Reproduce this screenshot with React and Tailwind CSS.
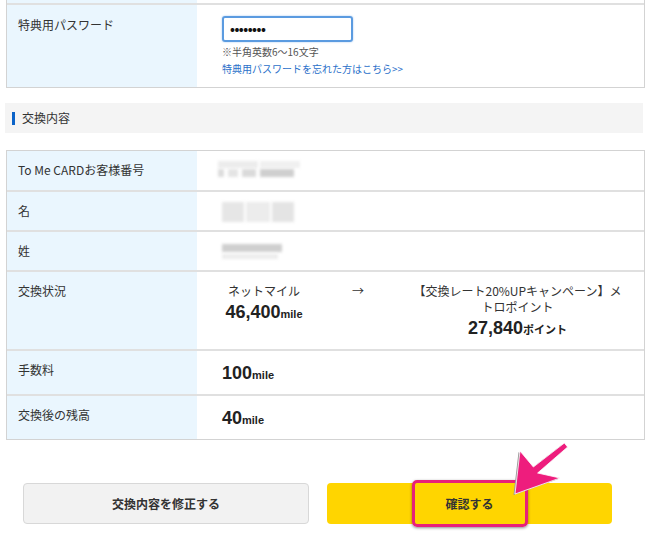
import React from 'react';

const font = "font-['Noto_Sans_CJK_JP','Noto_Sans',sans-serif]";

function Blur({ className }) {
  return <div className={`blur-[1.5px] ${className}`} />;
}

function Row({ label, children, className = '', valueClass = '' }) {
  return (
    <div className={`grid grid-cols-[190px_1fr] border-t-2 border-[#e0e0e0] ${className}`}>
      <div className="bg-[#eaf6fe] pl-[11px] pt-[11px] text-[12px] leading-[16px] text-[#333]">{label}</div>
      <div className={`pl-[25px] ${valueClass}`}>{children}</div>
    </div>
  );
}

function Amount({ value, unit }) {
  return (
    <span className="font-['Liberation_Sans','Noto_Sans_CJK_JP',sans-serif] text-[18px] font-bold text-[#222]">
      {value}
      <span className="text-[11px]">{unit}</span>
    </span>
  );
}

export default function App() {
  return (
    <div className={`relative w-[650px] h-[533px] overflow-hidden bg-white ${font}`}>
      {/* password table */}
      <div className="ml-[6px] w-[639px] border-x border-b border-[#d3d3d3]">
        <div className="grid grid-cols-[190px_1fr] h-[3px]">
          <div className="bg-[#eaf6fe]" />
          <div />
        </div>
        <div className="grid grid-cols-[190px_1fr] h-[84px] border-t-2 border-[#e0e0e0]">
          <div className="bg-[#eaf6fe] pl-[11px] pt-[12px] text-[12px] leading-[16px] text-[#333]">特典用パスワード</div>
          <div className="pl-[25px] pt-[11px]">
            <div className="w-[131px] h-[26px] border-2 border-[#5b9be0] rounded-[3px] flex items-center pl-[6px] text-[13px] font-bold tracking-[-0.5px] text-[#111] shadow-[0_0_2px_#9cc3f0]">
              ••••••••
            </div>
            <div className="mt-[1px] text-[10px] leading-[17px] text-[#555]">※半角英数6〜16文字</div>
            <div className="text-[10px] leading-[17px] text-[#2a6fc9]">特典用パスワードを忘れた方はこちら&gt;&gt;</div>
          </div>
        </div>
      </div>

      {/* section header */}
      <div className="mt-[15px] ml-[5px] w-[638px] h-[30px] bg-[#f4f4f4] flex items-center pl-[7px]">
        <div className="w-[3px] h-[13px] bg-[#0b63c8] mr-[7px]" />
        <span className="text-[12px] text-[#333]">交換内容</span>
      </div>

      {/* exchange table */}
      <div className="mt-[17px] ml-[6px] w-[639px] border border-[#d3d3d3]">
        <div className="grid grid-cols-[190px_1fr] h-[39px]">
          <div className="bg-[#eaf6fe] pl-[11px] pt-[11px] text-[12px] leading-[16px] text-[#333]">To Me CARDお客様番号</div>
          <div className="pl-[21px] pt-[10px] flex flex-col gap-[1px]">
            <div className="flex gap-[2px]">
              <Blur className="w-[40px] h-[7px] bg-[#ececec]" />
              <Blur className="w-[40px] h-[7px] bg-[#f0f0f0]" />
            </div>
            <div className="flex gap-[4px]">
              <Blur className="w-[6px] h-[8px] bg-[#dcdcdc]" />
              <Blur className="w-[10px] h-[8px] bg-[#e4e4e4]" />
              <Blur className="w-[14px] h-[8px] bg-[#dadada]" />
              <Blur className="w-[34px] h-[8px] bg-[#cfcfcf]" />
            </div>
          </div>
        </div>
        <Row label="名" className="h-[40px]" valueClass="pl-[21px] pt-[10px]">
          <div className="flex gap-[2px]">
            <Blur className="w-[22px] h-[20px] bg-[#e6e6e6]" />
            <Blur className="w-[24px] h-[20px] bg-[#ececec]" />
            <Blur className="w-[22px] h-[20px] bg-[#e4e4e4]" />
          </div>
        </Row>
        <Row label="姓" className="h-[40px]" valueClass="pl-[21px] pt-[12px]">
          <Blur className="w-[60px] h-[8px] bg-[#cfcfcf]" />
          <Blur className="mt-[2px] w-[56px] h-[5px] bg-[#ececec]" />
        </Row>
        <Row label="交換状況" className="h-[79px]" valueClass="pl-[25px] pt-[11px]">
          <div className="flex text-[#333]">
            <div className="w-[84px] text-center">
              <div className="text-[12px] leading-[16px]">ネットマイル</div>
              <div className="leading-[24px]">
                <Amount value="46,400" unit="mile" />
              </div>
            </div>
            <div className="w-[104px] text-center text-[12px] leading-[16px]">→</div>
            <div className="w-[215px] text-center">
              <div className="text-[12px] leading-[16px]">
                【交換レート20%UPキャンペーン】メ
                <br />
                トロポイント
              </div>
              <div className="leading-[24px]">
                <Amount value="27,840" unit="ポイント" />
              </div>
            </div>
          </div>
        </Row>
        <Row label="手数料" className="h-[45px]" valueClass="pt-[11px] leading-[20px]">
          <Amount value="100" unit="mile" />
        </Row>
        <Row label="交換後の残高" className="h-[45px]" valueClass="pt-[11px] leading-[20px]">
          <Amount value="40" unit="mile" />
        </Row>
      </div>

      {/* buttons */}
      <div className="mt-[43px] pl-[23px] flex gap-[18px]">
        <button className="w-[286px] h-[41px] bg-[#f2f2f2] border border-[#d8d8d8] rounded-[4px] text-[12px] font-bold text-[#333]">
          交換内容を修正する
        </button>
        <button className="relative w-[285px] h-[41px] bg-[#ffd500] rounded-[4px] text-[12px] font-bold text-[#333]">
          確認する
          <span className="absolute left-[85px] top-[-3px] w-[116px] h-[47px] border-[3px] border-[#e8207a] rounded-[5px] shadow-[0_1px_3px_rgba(0,0,0,0.45)]" />
        </button>
      </div>

      {/* pointer arrow */}
      <svg className="absolute left-[505px] top-[438px]" width="70" height="62" viewBox="0 0 70 62">
        <polygon
          points="10,56 15,13 28.4,29 59.4,5 62.6,9 32.6,35 55,40"
          fill="#999"
          transform="translate(-1.5,1)"
        />
        <polygon
          points="10,56 15,13 28.4,29 59.4,5 62.6,9 32.6,35 55,40"
          fill="#ee1d7d"
          stroke="#fff"
          strokeWidth="0.8"
          strokeLinejoin="round"
        />
      </svg>
    </div>
  );
}
